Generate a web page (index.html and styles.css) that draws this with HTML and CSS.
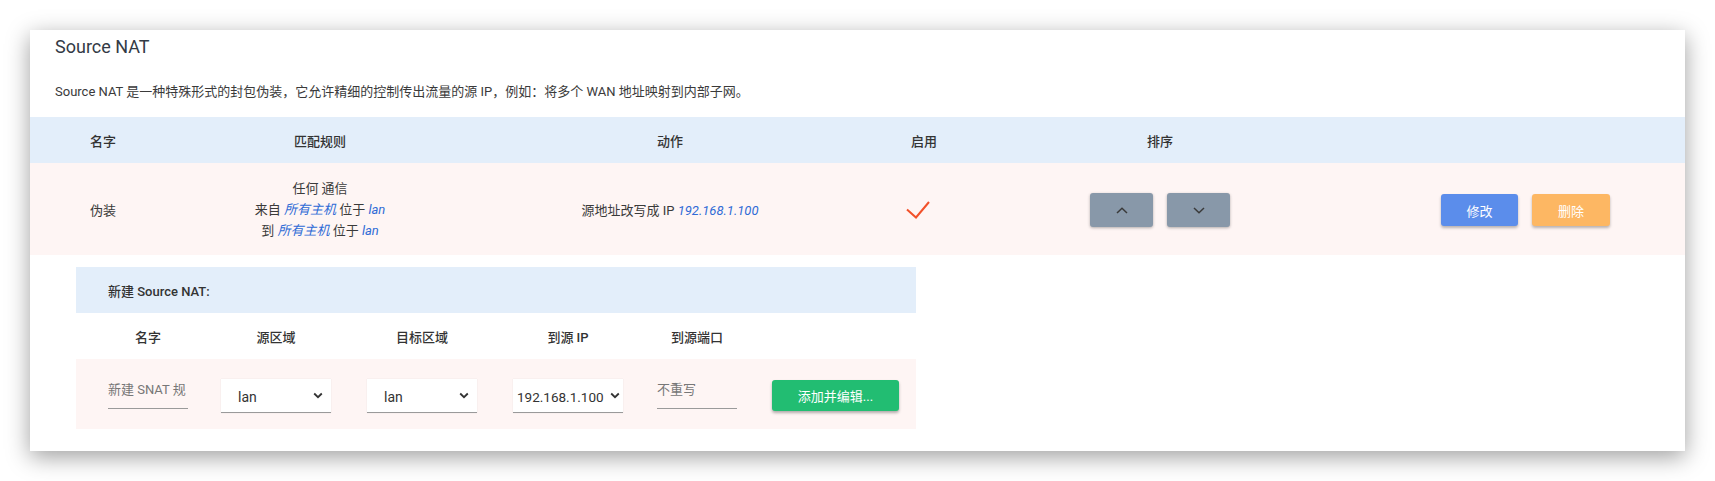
FILE: index.html
```html
<!DOCTYPE html>
<html lang="zh-CN">
<head>
<meta charset="utf-8">
<title>Source NAT</title>
<link rel="stylesheet" href="styles.css">
</head>
<body>
<div class="card">
  <h2 class="title">Source NAT</h2>
  <p class="desc">Source NAT 是一种特殊形式的封包伪装，它允许精细的控制传出流量的源 IP，例如：将多个 WAN 地址映射到内部子网。</p>

  <div class="table">
    <div class="tgrid thead">
      <div class="c c-name">名字</div>
      <div class="c">匹配规则</div>
      <div class="c">动作</div>
      <div class="c">启用</div>
      <div class="c">排序</div>
      <div class="c"></div>
    </div>
    <div class="tgrid trow">
      <div class="c c-name">伪装</div>
      <div class="c c-rule">
        <div>任何 通信</div>
        <div>来自 <em>所有主机</em> 位于 <em>lan</em></div>
        <div>到 <em>所有主机</em> 位于 <em>lan</em></div>
      </div>
      <div class="c"><span>源地址改写成 IP <em>192.168.1.100</em></span></div>
      <div class="c">
        <svg class="check" width="24" height="18" viewBox="0 0 24 18"><polyline points="1,8.5 10,16.5 23,1" fill="none" stroke="#f2512a" stroke-width="2"/></svg>
      </div>
      <div class="c c-sort">
        <button class="btn-sort" type="button"><svg width="12" height="7" viewBox="0 0 12 7"><polyline points="1,6 6,1.2 11,6" fill="none" stroke="#3a3a3a" stroke-width="1.5"/></svg></button>
        <button class="btn-sort" type="button"><svg width="12" height="7" viewBox="0 0 12 7"><polyline points="1,1 6,5.8 11,1" fill="none" stroke="#3a3a3a" stroke-width="1.5"/></svg></button>
      </div>
      <div class="c c-actions">
        <button class="btn btn-edit" type="button">修改</button>
        <button class="btn btn-del" type="button">删除</button>
      </div>
    </div>
  </div>

  <div class="new">
    <div class="new-head">新建 Source NAT:</div>
    <div class="ngrid ncols">
      <div class="n">名字</div>
      <div class="n">源区域</div>
      <div class="n">目标区域</div>
      <div class="n">到源 IP</div>
      <div class="n">到源端口</div>
      <div class="n"></div>
    </div>
    <div class="ngrid ninputs">
      <div class="n"><input class="line-input w-name" type="text" placeholder="新建 SNAT 规"></div>
      <div class="n"><div class="sel"><span class="sel-text">lan</span><svg class="sel-arrow" width="10" height="7" viewBox="0 0 10 7"><polyline points="1.2,1.5 5,5.2 8.8,1.5" fill="none" stroke="#333" stroke-width="1.8"/></svg></div></div>
      <div class="n"><div class="sel"><span class="sel-text">lan</span><svg class="sel-arrow" width="10" height="7" viewBox="0 0 10 7"><polyline points="1.2,1.5 5,5.2 8.8,1.5" fill="none" stroke="#333" stroke-width="1.8"/></svg></div></div>
      <div class="n"><div class="sel sel-ip"><span class="sel-text">192.168.1.100</span><svg class="sel-arrow" width="10" height="7" viewBox="0 0 10 7"><polyline points="1.2,1.5 5,5.2 8.8,1.5" fill="none" stroke="#333" stroke-width="1.8"/></svg></div></div>
      <div class="n"><input class="line-input w-port" type="text" placeholder="不重写"></div>
      <div class="n n-btn"><button class="btn btn-add" type="button">添加并编辑...</button></div>
    </div>
  </div>
</div>
</body>
</html>
```

FILE: styles.css
```css
* { box-sizing: border-box; }

html, body {
  margin: 0;
  padding: 0;
  background: #ffffff;
}

body {
  font-family: Roboto, "Noto Sans CJK SC", sans-serif;
  color: #3a3a3a;
  font-size: 13px;
  padding: 30px 30px 0 30px;
  height: 481px;
  overflow: hidden;
}

.card {
  width: 1655px;
  height: 421px;
  background: #ffffff;
  box-shadow: 0 6px 22px rgba(0, 0, 0, 0.38);
  padding-top: 5px;
}

.title {
  margin: 0 0 23px 0;
  padding-left: 25px;
  font-size: 18px;
  line-height: 24px;
  font-weight: 400;
  color: #333a45;
}

.desc {
  margin: 0 0 15px 0;
  padding-left: 25px;
  font-size: 13px;
  line-height: 20px;
  color: #3a3a3a;
}

.tgrid {
  display: grid;
  grid-template-columns: 150px 280px 420px 88px 384px 1fr;
}

.thead {
  height: 46px;
  background: #e3eefa;
  font-weight: 500;
  color: #333;
}

.trow {
  height: 92px;
  background: #fef5f4;
}

.c {
  display: flex;
  align-items: center;
  justify-content: center;
  text-align: center;
}

.c-name {
  justify-content: flex-start;
  padding-left: 60px;
}

.c-rule {
  flex-direction: column;
  line-height: 21px;
}

em {
  color: #2f6bd6;
  font-style: italic;
}

.check { display: block; margin-left: -12px; margin-top: 2px; }

.c-sort { gap: 14px; padding-top: 2px; }

.btn-sort {
  width: 63px;
  height: 34px;
  border: 0;
  border-radius: 3px;
  background: #8898a9;
  box-shadow: 0 1px 3px rgba(0, 0, 0, 0.3);
  display: flex;
  align-items: center;
  justify-content: center;
  padding: 0;
}
.btn-sort svg { display: block; }

.c-actions {
  justify-content: flex-start;
  padding-left: 89px;
  gap: 14px;
  padding-top: 2px;
}

.btn {
  border: 0;
  border-radius: 3px;
  color: #ffffff;
  font-family: Roboto, "Noto Sans CJK SC", sans-serif;
  font-size: 13px;
  padding: 0;
  box-shadow: 0 2px 3px rgba(0, 0, 0, 0.28);
}

.btn-edit { width: 77px; height: 32px; background: #5b8deb; }
.btn-del  { width: 78px; height: 32px; background: #fdb763; }

.new {
  margin: 12px 0 0 46px;
  width: 840px;
}

.new-head {
  height: 46px;
  background: #e3eefa;
  padding-left: 32px;
  display: flex;
  align-items: center;
  font-weight: 500;
  color: #333;
}

.ngrid {
  display: grid;
  grid-template-columns: 144px 112px 180px 112px 146px 146px;
}

.ncols {
  height: 46px;
  font-weight: 500;
  color: #333;
}

.ninputs {
  height: 70px;
  background: #fef5f4;
}

.n {
  display: flex;
  align-items: center;
  justify-content: center;
}

.n-btn { justify-content: flex-start; padding-left: 2px; padding-top: 3px; }

.line-input {
  height: 32px;
  border: 0;
  border-bottom: 1px solid #9a9a9a;
  background: transparent;
  font-family: Roboto, "Noto Sans CJK SC", sans-serif;
  font-size: 13px;
  color: #333;
  padding: 0 0 6px 0;
  outline: none;
}
.line-input::placeholder { color: #777; }
.w-name { width: 80px; margin-bottom: 2px; }
.w-port { width: 80px; margin-bottom: 2px; }

.sel {
  width: 110px;
  height: 34px;
  background: #ffffff;
  border-bottom: 1px solid #9a9a9a;
  box-shadow: 0 0 1px rgba(0, 0, 0, 0.12);
  display: flex;
  align-items: center;
  padding: 0 8px 0 17px;
  margin-top: 4px;
  font-size: 14px;
  color: #333;
  overflow: hidden;
}

.sel-text {
  flex: 1;
  white-space: nowrap;
  padding-top: 2px;
}

.sel-ip { padding-left: 4px; padding-right: 3px; font-size: 13.5px; }

.sel-arrow { display: block; flex: none; margin-left: 2px; }

.btn-add {
  width: 127px;
  height: 31px;
  background: #22bd72;
  box-shadow: 0 2px 3px rgba(0, 0, 0, 0.3);
}
```
